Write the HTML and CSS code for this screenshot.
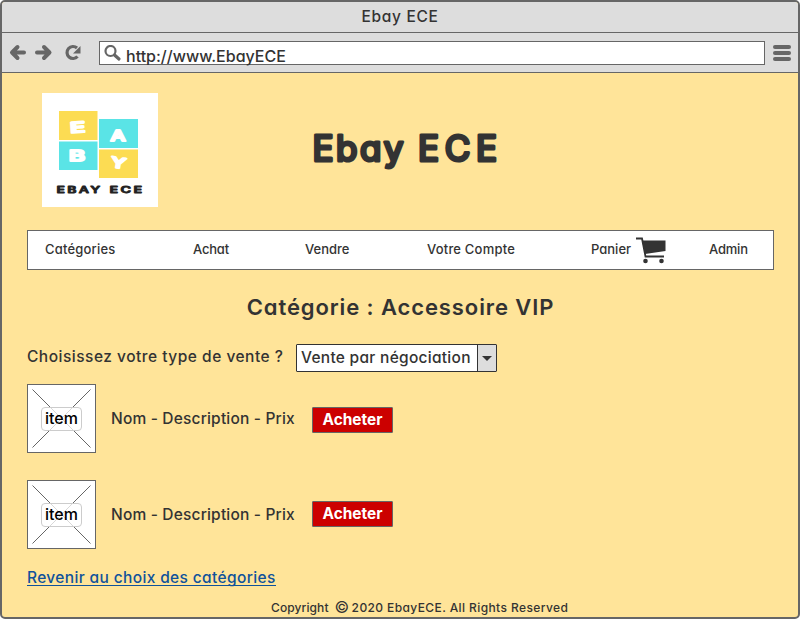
FILE: index.html
```html
<!DOCTYPE html>
<html lang="fr">
<head>
<meta charset="utf-8">
<title>Ebay ECE</title>
<link rel="stylesheet" href="styles.css">
</head>
<body>
<div class="window">
  <div class="titlebar"><span class="wintitle">Ebay ECE</span></div>
  <div class="toolbar">
    <svg class="arrows" width="74" height="18" viewBox="0 0 74 18" fill="none" stroke="#666" stroke-width="4" stroke-linecap="round" stroke-linejoin="round">
      <path d="M8.500 4 3 9.500 8.500 15M4 9.500H15"/>
      <path d="M35 4 40.500 9.500 35 15M39.500 9.500H28"/>
      <path d="M68 5A6 6 0 1 0 68.500 13.500" stroke-width="3.200" stroke-linecap="butt"/>
      <path d="M71.500 3V10.500H64Z" fill="#666" stroke="none"/>
    </svg>
    <div class="address">
      <svg width="18" height="18" viewBox="0 0 18 18" fill="none" stroke="#666"><circle cx="6.500" cy="6" r="5" stroke-width="2.200"/><path d="M10.500 10l4.500 4" stroke-width="3.200" stroke-linecap="round"/></svg>
      <span class="url">http://www.EbayECE</span>
    </div>
    <div class="burger"><i></i><i></i><i></i></div>
  </div>
  <main class="page">
    <header class="head">
      <svg class="logo" width="116" height="114" viewBox="0 0 116 114">
        <rect width="116" height="114" fill="#fff"/>
        <rect x="17" y="18" width="38.500" height="29" fill="#fcdc53"/>
        <rect x="57" y="26" width="39" height="29" fill="#5ae4e6"/>
        <rect x="17" y="48.500" width="38.500" height="28.500" fill="#5ae4e6"/>
        <rect x="57" y="56.500" width="39" height="28.500" fill="#fcdc53"/>
        <g class="logo-letters">
          <text x="28" y="39.500" textLength="15" lengthAdjust="spacingAndGlyphs" transform="rotate(-4 35 34)">E</text>
          <text x="68.500" y="47.500" textLength="15" lengthAdjust="spacingAndGlyphs">A</text>
          <text x="27" y="68" textLength="16" lengthAdjust="spacingAndGlyphs">B</text>
          <text x="69" y="75" textLength="15" lengthAdjust="spacingAndGlyphs" transform="rotate(9 76 70)">Y</text>
        </g>
        <g class="logo-name">
          <text x="14.500" y="100" textLength="46" lengthAdjust="spacingAndGlyphs">EBAY</text>
          <text x="67.500" y="100" textLength="35" lengthAdjust="spacingAndGlyphs">ECE</text>
        </g>
      </svg>
      <h1><svg width="190" height="50" viewBox="0 0 190 50"><text class="h1-text" y="36"><tspan x="1.500" textLength="91">Ebay</tspan> <tspan x="107" textLength="79">ECE</tspan></text></svg></h1>
    </header>
    <nav class="menu">
      <a class="wide">Catégories</a><a class="tight">Achat</a><a>Vendre</a><a class="wide">Votre Compte</a>
      <a class="cart">Panier<svg width="31" height="28" viewBox="0 0 31 28"><path d="M0 1.500H6L9.500 19.500H28" fill="none" stroke="#333" stroke-width="1.800"/><path d="M6 3.500H29.500V14L9 17Z" fill="#333"/><circle cx="9.500" cy="24" r="2.300" fill="#333"/><circle cx="25.500" cy="24" r="2.300" fill="#333"/></svg></a>
      <a class="tight">Admin</a>
    </nav>
    <h2><span>Catégorie : Accessoire VIP</span></h2>
    <div class="choice">
      <span class="question">Choisissez votre type de vente ?</span>
      <div class="select"><span>Vente par négociation</span><b><i></i></b></div>
    </div>
    <div class="item">
      <div class="thumb"><svg width="67" height="67" stroke="#666"><path d="M4.500 4.500l58 58M62.500 4.500l-58 58"/></svg><span>item</span></div>
      <span class="desc">Nom - Description - Prix</span>
      <div class="buy low"><span>Acheter</span></div>
    </div>
    <div class="item">
      <div class="thumb"><svg width="67" height="67" stroke="#666"><path d="M4.500 4.500l58 58M62.500 4.500l-58 58"/></svg><span>item</span></div>
      <span class="desc">Nom - Description - Prix</span>
      <div class="buy"><span>Acheter</span></div>
    </div>
    <a class="back">Revenir au choix des catégories</a>
    <footer><span>Copyright</span><span class="copy">©</span><span class="rights">2020 EbayECE. All Rights Reserved</span></footer>
  </main>
</div>
</body>
</html>
```
FILE: styles.css
```css
* { box-sizing: border-box; }
body {
  margin: 0;
  background: #fff;
  color: #333;
  font-family: Inter, "Liberation Sans", sans-serif;
  font-weight: 500;
  font-feature-settings: "cv11", "calt" 0;
  white-space: nowrap;
}
svg { display: block; flex: none; }
.window {
  width: 800px;
  height: 619px;
  border: 2px solid #666;
  border-radius: 5px;
  background: #ffe499;
  overflow: hidden;
}
.titlebar {
  height: 31px;
  border-bottom: 1px solid #666;
  background: #ddd;
  text-align: center;
  font-size: 15.5px;
  line-height: 29px;
}
.wintitle { letter-spacing: 0.7px; }
.toolbar {
  display: flex;
  align-items: center;
  height: 40px;
  padding: 0 7px 0 8px;
  border-bottom: 1px solid #666;
  background: #ddd;
}
.arrows { margin: -1px 0 0 -1px; }
.address {
  display: flex;
  width: 666px;
  height: 24px;
  margin-left: 16px;
  padding: 3px 0 0 4px;
  border: 1px solid #666;
  background: #fff;
}
.url { margin: -1px 0 0 4px; font-size: 16px; line-height: 24px; }
.burger { display: grid; gap: 2px; margin-left: 8px; }
.burger i { width: 18px; height: 4px; border-radius: 2px; background: #666; }
.page { padding: 20px 24px 0 25px; }
.head { display: flex; height: 137px; padding-left: 15px; }
.logo-letters { fill: #fff; stroke: #fff; stroke-width: 2; stroke-linejoin: round; font-size: 14.5px; font-weight: 500; }
.logo-name { fill: #222; stroke: #222; stroke-width: 0.8; stroke-linejoin: round; font-size: 9px; font-weight: 600; letter-spacing: 1.5px; }
h1 { margin: 32px 0 0 153px; }
.h1-text { fill: #333; stroke: #333; stroke-width: 3.2; stroke-linejoin: round; font-size: 35px; font-weight: 400; }
.menu {
  display: grid;
  grid-template-columns: 148px 112px 122px 164px 118px auto;
  align-items: center;
  width: 747px;
  height: 40px;
  padding-left: 17px;
  border: 1px solid #666;
  background: #fff;
  font-size: 13px;
}
.menu a { margin-top: -2px; }
.wide { letter-spacing: 0.2px; }
.tight { letter-spacing: -0.2px; }
.menu .cart { display: flex; align-items: center; gap: 5px; }
.cart svg { margin-top: 3px; }
h2 { margin: 22px 0 0; text-align: center; font-size: 22px; line-height: 30px; font-weight: 600; }
h2 span { letter-spacing: 0.9px; }
.choice { display: flex; height: 28px; margin-top: 22px; }
.question { width: 269px; font-size: 15.5px; line-height: 25px; letter-spacing: 0.5px; }
.select {
  display: flex;
  width: 201px;
  height: 28px;
  border: 1px solid #333;
  border-radius: 1px;
  background: #fff;
  font-size: 15.5px;
  line-height: 25px;
}
.select span { width: 180px; padding-left: 4px; letter-spacing: 0.28px; }
.select b { display: grid; place-items: center; width: 19px; border-left: 1px solid #333; background: #ddd; }
.select i { border: 5px solid transparent; border-top-color: #333; border-bottom: 0; }
.item { display: flex; align-items: center; height: 69px; margin-top: 12px; }
.item + .item { margin-top: 27px; }
.thumb { display: grid; place-items: center; width: 69px; height: 69px; border: 1px solid #666; background: #fff; }
.thumb > * { grid-area: 1 / 1; }
.thumb span {
  position: relative;
  width: 41px;
  height: 24px;
  border: 1px solid #ccc;
  border-radius: 4px;
  background: rgba(255, 255, 255, .75);
  color: #000;
  font-size: 16px;
  line-height: 21px;
  text-align: center;
}
.desc { width: 201px; margin-left: 15px; font-size: 15.5px; letter-spacing: 0.18px; }
.buy {
  width: 81px;
  height: 26px;
  margin-top: -2px;
  border: 1px solid #666;
  border-radius: 1px;
  background: #c00;
  color: #fff;
  font-size: 15.4px;
  font-weight: 650;
  line-height: 23px;
  text-align: center;
}
.buy.low { margin-top: 2px; }
.back { display: block; width: 249px; height: 18px; margin-top: 19px; border-bottom: 1px solid #10529b; color: #10529b; font-size: 15.5px; line-height: 19px; letter-spacing: 0.36px; }
footer { display: flex; align-items: center; height: 16px; margin: 13px 0 0 244px; font-size: 12px; letter-spacing: 0.1px; }
.copy { width: 16px; margin: 0 1px 0 6px; font-size: 16px; font-weight: 400; }
.rights { letter-spacing: 0.4px; }
```
